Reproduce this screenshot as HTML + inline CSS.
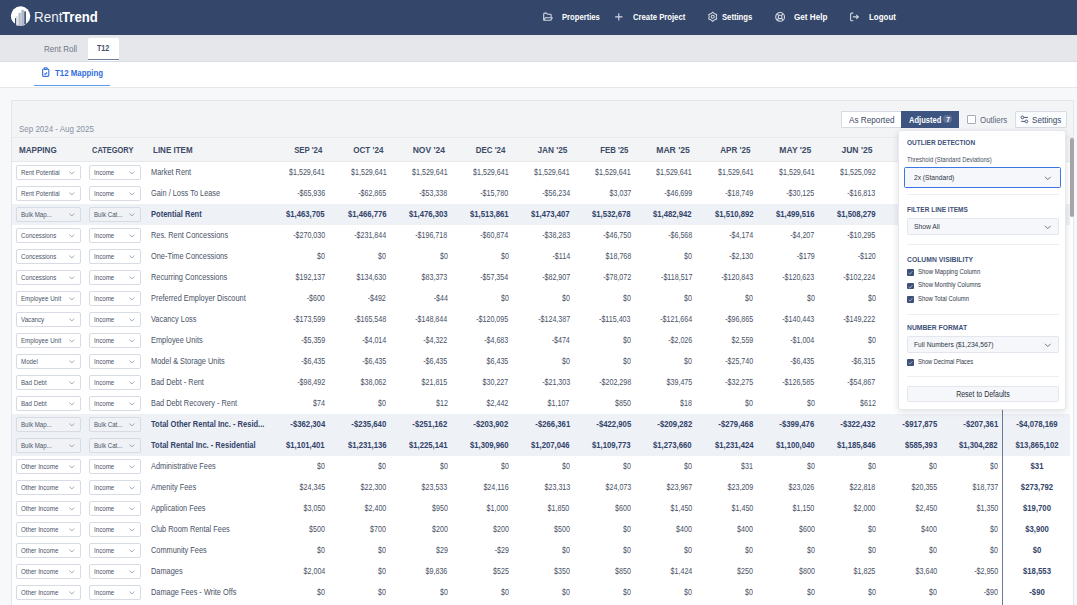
<!DOCTYPE html>
<html><head><meta charset="utf-8"><style>
html,body{margin:0;padding:0;}
body{width:1077px;height:605px;overflow:hidden;position:relative;background:#f7f8fa;font-family:"Liberation Sans", sans-serif;}
.t{position:absolute;white-space:nowrap;line-height:1;}
</style></head><body>
<div style="position:absolute;left:0px;top:0px;width:1077px;height:35px;background:#34476a"></div>
<svg style="position:absolute;left:0;top:0" width="40" height="35" viewBox="0 0 40 35">
<circle cx="20.6" cy="16" r="9.7" fill="#fff"/>
<path d="M10.3 20.3 L12.4 22.3 L13.4 26.2 L10 26.2 Z" fill="#34476a"/>
<rect x="16.2" y="16" width="2.1" height="9.6" fill="#dde1e8"/>
<rect x="18.3" y="12.7" width="2.9" height="12.9" fill="#c9ced9"/>
<rect x="21.2" y="9.8" width="2.9" height="15.8" fill="#bcc3d0"/>
<rect x="19.5" y="13.2" width="0.7" height="12.4" fill="#9ea7b8"/>
<rect x="22.5" y="10.6" width="0.7" height="15" fill="#9ea7b8"/>
<rect x="24.3" y="11.4" width="1.6" height="12.6" fill="#34476a"/>
<rect x="15" y="18" width="1.1" height="8.2" fill="#34476a"/>
<rect x="11" y="16" width="5" height="0.5" fill="#e3e6ec"/>
</svg>
<div class="t" style="left:34.20px;transform-origin:0 50%;top:9.72px;font-size:14.39px;font-weight:400;color:#eef0f4;transform:scaleX(0.936);">Rent</div>
<div class="t" style="left:62.30px;transform-origin:0 50%;top:9.72px;font-size:14.39px;font-weight:700;color:#ffffff;transform:scaleX(0.912);">Trend</div>
<svg style="position:absolute;left:538px;top:8px" width="22" height="18" viewBox="0 0 22 18" fill="none" stroke="#d3d9e3" stroke-width="1.1" stroke-linejoin="round">
<path d="M5.7 12 V6.1 Q5.7 5.1 6.7 5.1 H8.4 L9.5 6.2 H12.2 Q13.1 6.2 13.1 7.1 V9.4"/><path d="M5.8 12.3 L7.3 9.7 H14.3 L12.8 12.3 Z"/></svg>
<div class="t" style="left:562.30px;transform-origin:0 50%;top:12.95px;font-size:8.80px;font-weight:700;color:#ffffff;transform:scaleX(0.870);">Properties</div>
<svg style="position:absolute;left:612px;top:8px" width="14" height="18" viewBox="0 0 14 18" stroke="#d3d9e3" stroke-width="1.1"><path d="M6.8 5.3 V12.5 M3.2 8.9 H10.4"/></svg>
<div class="t" style="left:632.80px;transform-origin:0 50%;top:12.95px;font-size:8.80px;font-weight:700;color:#ffffff;transform:scaleX(0.876);">Create Project</div>
<svg style="position:absolute;left:703px;top:8px" width="22" height="18" viewBox="0 0 22 18" fill="none" stroke="#d3d9e3" stroke-width="1.05" stroke-linejoin="round">
<path d="M9.70 4.20 L11.45 5.77 L13.68 6.50 L13.20 8.80 L13.68 11.10 L11.45 11.83 L9.70 13.40 L7.95 11.83 L5.72 11.10 L6.20 8.80 L5.72 6.50 L7.95 5.77 Z"/><circle cx="9.7" cy="8.8" r="1.5"/></svg>
<div class="t" style="left:722.30px;transform-origin:0 50%;top:12.95px;font-size:8.80px;font-weight:700;color:#ffffff;transform:scaleX(0.872);">Settings</div>
<svg style="position:absolute;left:770px;top:8px" width="22" height="18" viewBox="0 0 22 18" fill="none" stroke="#d3d9e3" stroke-width="1.1">
<circle cx="10.1" cy="8.9" r="4.4"/><rect x="8.4" y="7.2" width="3.4" height="3.4" rx="0.6"/><path d="M7 5.8 L8.4 7.2 M13.2 5.8 L11.8 7.2 M7 12 L8.4 10.6 M13.2 12 L11.8 10.6"/></svg>
<div class="t" style="left:794.20px;transform-origin:0 50%;top:12.95px;font-size:8.80px;font-weight:700;color:#ffffff;transform:scaleX(0.923);">Get Help</div>
<svg style="position:absolute;left:845px;top:8px" width="22" height="18" viewBox="0 0 22 18" fill="none" stroke="#d3d9e3" stroke-width="1.1" stroke-linejoin="round">
<path d="M8.3 5.1 H6.6 Q5.6 5.1 5.6 6.1 V11.7 Q5.6 12.7 6.6 12.7 H8.3"/><path d="M7.9 8.9 H13.3 M11.3 6.9 L13.4 8.9 L11.3 10.9"/></svg>
<div class="t" style="left:868.60px;transform-origin:0 50%;top:12.95px;font-size:8.80px;font-weight:700;color:#ffffff;transform:scaleX(0.902);">Logout</div>
<div style="position:absolute;left:0px;top:35px;width:1077px;height:27px;background:#e6e7eb"></div>
<div style="position:absolute;left:0px;top:61px;width:1077px;height:1px;background:#d9dbe0"></div>
<div class="t" style="left:43.60px;transform-origin:0 50%;top:45.12px;font-size:9.08px;font-weight:400;color:#6f7787;transform:scaleX(0.886);">Rent Roll</div>
<div style="position:absolute;left:88px;top:37.6px;width:31px;height:23px;background:#fff;border-radius:2px 2px 0 0"></div>
<div style="position:absolute;left:88px;top:58.9px;width:31px;height:1.2px;background:#6b7c99"></div>
<div class="t" style="left:97.30px;transform-origin:0 50%;top:44.31px;font-size:8.38px;font-weight:700;color:#45536b;transform:scaleX(0.854);">T12</div>
<div style="position:absolute;left:0px;top:62px;width:1077px;height:25px;background:#fff"></div>
<div style="position:absolute;left:0px;top:87px;width:1077px;height:1px;background:#e5e7eb"></div>
<svg style="position:absolute;left:38px;top:64px" width="16" height="16" viewBox="0 0 16 16" fill="none" stroke="#3a72e0" stroke-width="1.15" stroke-linejoin="round">
<rect x="4.6" y="5" width="6.2" height="7.3" rx="1"/><rect x="6.3" y="3.7" width="2.8" height="1.7" rx="0.5" fill="#fff"/><path d="M6.2 9.6 L7.2 10.4 L9.2 8.5"/></svg>
<div class="t" style="left:55.40px;transform-origin:0 50%;top:68.52px;font-size:9.08px;font-weight:700;color:#2f6ee0;transform:scaleX(0.866);">T12 Mapping</div>
<div style="position:absolute;left:34px;top:84.5px;width:76px;height:1.8px;background:#5b9bf2"></div>
<div style="position:absolute;left:0px;top:88px;width:1077px;height:517px;background:#f7f8fa"></div>
<div style="position:absolute;left:11px;top:100px;width:1063px;height:505px;background:#fff;border:1px solid #e3e6eb;border-bottom:none;box-sizing:border-box"></div>
<div style="position:absolute;left:12px;top:101px;width:1061px;height:36.5px;background:#f3f4f6"></div>
<div style="position:absolute;left:12px;top:137px;width:1061px;height:1px;background:#e6e8ec"></div>
<div style="position:absolute;left:12px;top:138px;width:1061px;height:23.5px;background:#f3f4f6"></div>
<div style="position:absolute;left:12px;top:161px;width:1061px;height:1px;background:#e6e8ec"></div>
<div class="t" style="left:18.80px;transform-origin:0 50%;top:124.85px;font-size:8.80px;font-weight:400;color:#8791a3;transform:scaleX(0.906);">Sep 2024 - Aug 2025</div>
<div class="t" style="left:18.80px;transform-origin:0 50%;top:145.57px;font-size:8.66px;font-weight:700;color:#3c4b66;transform:scaleX(0.933);">MAPPING</div>
<div class="t" style="left:92.00px;transform-origin:0 50%;top:145.57px;font-size:8.66px;font-weight:700;color:#3c4b66;transform:scaleX(0.860);">CATEGORY</div>
<div class="t" style="left:153.20px;transform-origin:0 50%;top:145.57px;font-size:8.66px;font-weight:700;color:#3c4b66;transform:scaleX(0.924);">LINE ITEM</div>
<div class="t" style="right:754.70px;transform-origin:100% 50%;top:145.57px;font-size:8.66px;font-weight:700;color:#3c4b66;transform:scaleX(0.900);">SEP '24</div>
<div class="t" style="right:693.53px;transform-origin:100% 50%;top:145.57px;font-size:8.66px;font-weight:700;color:#3c4b66;transform:scaleX(0.932);">OCT '24</div>
<div class="t" style="right:632.36px;transform-origin:100% 50%;top:145.57px;font-size:8.66px;font-weight:700;color:#3c4b66;transform:scaleX(0.979);">NOV '24</div>
<div class="t" style="right:571.19px;transform-origin:100% 50%;top:145.57px;font-size:8.66px;font-weight:700;color:#3c4b66;transform:scaleX(0.917);">DEC '24</div>
<div class="t" style="right:510.02px;transform-origin:100% 50%;top:145.57px;font-size:8.66px;font-weight:700;color:#3c4b66;transform:scaleX(0.954);">JAN '25</div>
<div class="t" style="right:448.85px;transform-origin:100% 50%;top:145.57px;font-size:8.66px;font-weight:700;color:#3c4b66;transform:scaleX(0.897);">FEB '25</div>
<div class="t" style="right:387.68px;transform-origin:100% 50%;top:145.57px;font-size:8.66px;font-weight:700;color:#3c4b66;transform:scaleX(0.993);">MAR '25</div>
<div class="t" style="right:326.51px;transform-origin:100% 50%;top:145.57px;font-size:8.66px;font-weight:700;color:#3c4b66;transform:scaleX(0.929);">APR '25</div>
<div class="t" style="right:265.34px;transform-origin:100% 50%;top:145.57px;font-size:8.66px;font-weight:700;color:#3c4b66;transform:scaleX(0.989);">MAY '25</div>
<div class="t" style="right:204.17px;transform-origin:100% 50%;top:145.57px;font-size:8.66px;font-weight:700;color:#3c4b66;transform:scaleX(0.986);">JUN '25</div>
<div class="t" style="right:143.00px;transform-origin:100% 50%;top:145.57px;font-size:8.66px;font-weight:700;color:#3c4b66;transform:scaleX(1.014);">JUL '25</div>
<div class="t" style="right:81.83px;transform-origin:100% 50%;top:145.57px;font-size:8.66px;font-weight:700;color:#3c4b66;transform:scaleX(0.926);">AUG '25</div>
<div style="position:absolute;left:16.3px;top:165.3px;width:64.3px;height:14.5px;background:#fff;border:1px solid #d6dbe4;border-radius:2px;box-sizing:border-box"></div>
<div style="position:absolute;left:89.3px;top:165.3px;width:52px;height:14.5px;background:#fff;border:1px solid #d6dbe4;border-radius:2px;box-sizing:border-box"></div>
<div class="t" style="left:20.80px;transform-origin:0 50%;top:169.09px;font-size:6.98px;font-weight:400;color:#4a5467;transform:scaleX(0.885);">Rent Potential</div>
<div class="t" style="left:94.10px;transform-origin:0 50%;top:169.09px;font-size:6.98px;font-weight:400;color:#4a5467;transform:scaleX(0.885);">Income</div>
<svg style="position:absolute;left:68.6px;top:170.90px" width="6" height="4" viewBox="0 0 6 4" fill="none" stroke="#8a93a6" stroke-width="0.8"><path d="M0.4 0.5 L2.8 3 L5.2 0.5"/></svg>
<svg style="position:absolute;left:129.3px;top:170.90px" width="6" height="4" viewBox="0 0 6 4" fill="none" stroke="#8a93a6" stroke-width="0.8"><path d="M0.4 0.5 L2.8 3 L5.2 0.5"/></svg>
<div class="t" style="left:151.10px;transform-origin:0 50%;top:167.77px;font-size:8.66px;font-weight:400;color:#485266;transform:scaleX(0.852);">Market Rent</div>
<div class="t" style="right:751.90px;transform-origin:100% 50%;top:168.43px;font-size:8.94px;font-weight:400;color:#485266;transform:scaleX(0.797);">$1,529,641</div>
<div class="t" style="right:690.73px;transform-origin:100% 50%;top:168.43px;font-size:8.94px;font-weight:400;color:#485266;transform:scaleX(0.797);">$1,529,641</div>
<div class="t" style="right:629.56px;transform-origin:100% 50%;top:168.43px;font-size:8.94px;font-weight:400;color:#485266;transform:scaleX(0.797);">$1,529,641</div>
<div class="t" style="right:568.39px;transform-origin:100% 50%;top:168.43px;font-size:8.94px;font-weight:400;color:#485266;transform:scaleX(0.797);">$1,529,641</div>
<div class="t" style="right:507.22px;transform-origin:100% 50%;top:168.43px;font-size:8.94px;font-weight:400;color:#485266;transform:scaleX(0.797);">$1,529,641</div>
<div class="t" style="right:446.05px;transform-origin:100% 50%;top:168.43px;font-size:8.94px;font-weight:400;color:#485266;transform:scaleX(0.797);">$1,529,641</div>
<div class="t" style="right:384.88px;transform-origin:100% 50%;top:168.43px;font-size:8.94px;font-weight:400;color:#485266;transform:scaleX(0.797);">$1,529,641</div>
<div class="t" style="right:323.71px;transform-origin:100% 50%;top:168.43px;font-size:8.94px;font-weight:400;color:#485266;transform:scaleX(0.797);">$1,529,641</div>
<div class="t" style="right:262.54px;transform-origin:100% 50%;top:168.43px;font-size:8.94px;font-weight:400;color:#485266;transform:scaleX(0.797);">$1,529,641</div>
<div class="t" style="right:201.37px;transform-origin:100% 50%;top:168.43px;font-size:8.94px;font-weight:400;color:#485266;transform:scaleX(0.797);">$1,525,092</div>
<div class="t" style="right:140.20px;transform-origin:100% 50%;top:168.43px;font-size:8.94px;font-weight:400;color:#485266;transform:scaleX(0.797);">$1,529,641</div>
<div class="t" style="right:79.03px;transform-origin:100% 50%;top:168.43px;font-size:8.94px;font-weight:400;color:#485266;transform:scaleX(0.797);">$1,529,641</div>
<div style="position:absolute;left:16.3px;top:186.3px;width:64.3px;height:14.5px;background:#fff;border:1px solid #d6dbe4;border-radius:2px;box-sizing:border-box"></div>
<div style="position:absolute;left:89.3px;top:186.3px;width:52px;height:14.5px;background:#fff;border:1px solid #d6dbe4;border-radius:2px;box-sizing:border-box"></div>
<div class="t" style="left:20.80px;transform-origin:0 50%;top:190.09px;font-size:6.98px;font-weight:400;color:#4a5467;transform:scaleX(0.885);">Rent Potential</div>
<div class="t" style="left:94.10px;transform-origin:0 50%;top:190.09px;font-size:6.98px;font-weight:400;color:#4a5467;transform:scaleX(0.885);">Income</div>
<svg style="position:absolute;left:68.6px;top:191.90px" width="6" height="4" viewBox="0 0 6 4" fill="none" stroke="#8a93a6" stroke-width="0.8"><path d="M0.4 0.5 L2.8 3 L5.2 0.5"/></svg>
<svg style="position:absolute;left:129.3px;top:191.90px" width="6" height="4" viewBox="0 0 6 4" fill="none" stroke="#8a93a6" stroke-width="0.8"><path d="M0.4 0.5 L2.8 3 L5.2 0.5"/></svg>
<div class="t" style="left:151.10px;transform-origin:0 50%;top:188.77px;font-size:8.66px;font-weight:400;color:#485266;transform:scaleX(0.852);">Gain / Loss To Lease</div>
<div class="t" style="right:751.90px;transform-origin:100% 50%;top:189.43px;font-size:8.94px;font-weight:400;color:#485266;transform:scaleX(0.797);">-$65,936</div>
<div class="t" style="right:690.73px;transform-origin:100% 50%;top:189.43px;font-size:8.94px;font-weight:400;color:#485266;transform:scaleX(0.797);">-$62,865</div>
<div class="t" style="right:629.56px;transform-origin:100% 50%;top:189.43px;font-size:8.94px;font-weight:400;color:#485266;transform:scaleX(0.797);">-$53,338</div>
<div class="t" style="right:568.39px;transform-origin:100% 50%;top:189.43px;font-size:8.94px;font-weight:400;color:#485266;transform:scaleX(0.797);">-$15,780</div>
<div class="t" style="right:507.22px;transform-origin:100% 50%;top:189.43px;font-size:8.94px;font-weight:400;color:#485266;transform:scaleX(0.797);">-$56,234</div>
<div class="t" style="right:446.05px;transform-origin:100% 50%;top:189.43px;font-size:8.94px;font-weight:400;color:#485266;transform:scaleX(0.797);">$3,037</div>
<div class="t" style="right:384.88px;transform-origin:100% 50%;top:189.43px;font-size:8.94px;font-weight:400;color:#485266;transform:scaleX(0.797);">-$46,699</div>
<div class="t" style="right:323.71px;transform-origin:100% 50%;top:189.43px;font-size:8.94px;font-weight:400;color:#485266;transform:scaleX(0.797);">-$18,749</div>
<div class="t" style="right:262.54px;transform-origin:100% 50%;top:189.43px;font-size:8.94px;font-weight:400;color:#485266;transform:scaleX(0.797);">-$30,125</div>
<div class="t" style="right:201.37px;transform-origin:100% 50%;top:189.43px;font-size:8.94px;font-weight:400;color:#485266;transform:scaleX(0.797);">-$16,813</div>
<div class="t" style="right:140.20px;transform-origin:100% 50%;top:189.43px;font-size:8.94px;font-weight:400;color:#485266;transform:scaleX(0.797);">-$20,000</div>
<div class="t" style="right:79.03px;transform-origin:100% 50%;top:189.43px;font-size:8.94px;font-weight:400;color:#485266;transform:scaleX(0.797);">-$25,000</div>
<div style="position:absolute;left:12px;top:204px;width:1058px;height:21px;background:#eef1f6"></div>
<div style="position:absolute;left:16.3px;top:207.3px;width:64.3px;height:14.5px;background:#f0f2f6;border:1px solid #d6dbe4;border-radius:2px;box-sizing:border-box"></div>
<div style="position:absolute;left:89.3px;top:207.3px;width:52px;height:14.5px;background:#f0f2f6;border:1px solid #d6dbe4;border-radius:2px;box-sizing:border-box"></div>
<div class="t" style="left:20.80px;transform-origin:0 50%;top:211.09px;font-size:6.98px;font-weight:400;color:#4a5467;transform:scaleX(0.885);">Bulk Map...</div>
<div class="t" style="left:94.10px;transform-origin:0 50%;top:211.09px;font-size:6.98px;font-weight:400;color:#4a5467;transform:scaleX(0.885);">Bulk Cat...</div>
<svg style="position:absolute;left:68.6px;top:212.90px" width="6" height="4" viewBox="0 0 6 4" fill="none" stroke="#8a93a6" stroke-width="0.8"><path d="M0.4 0.5 L2.8 3 L5.2 0.5"/></svg>
<svg style="position:absolute;left:129.3px;top:212.90px" width="6" height="4" viewBox="0 0 6 4" fill="none" stroke="#8a93a6" stroke-width="0.8"><path d="M0.4 0.5 L2.8 3 L5.2 0.5"/></svg>
<div class="t" style="left:151.10px;transform-origin:0 50%;top:209.77px;font-size:8.66px;font-weight:700;color:#32436a;transform:scaleX(0.871);">Potential Rent</div>
<div class="t" style="right:751.90px;transform-origin:100% 50%;top:210.43px;font-size:8.94px;font-weight:700;color:#32436a;transform:scaleX(0.867);">$1,463,705</div>
<div class="t" style="right:690.73px;transform-origin:100% 50%;top:210.43px;font-size:8.94px;font-weight:700;color:#32436a;transform:scaleX(0.867);">$1,466,776</div>
<div class="t" style="right:629.56px;transform-origin:100% 50%;top:210.43px;font-size:8.94px;font-weight:700;color:#32436a;transform:scaleX(0.867);">$1,476,303</div>
<div class="t" style="right:568.39px;transform-origin:100% 50%;top:210.43px;font-size:8.94px;font-weight:700;color:#32436a;transform:scaleX(0.867);">$1,513,861</div>
<div class="t" style="right:507.22px;transform-origin:100% 50%;top:210.43px;font-size:8.94px;font-weight:700;color:#32436a;transform:scaleX(0.867);">$1,473,407</div>
<div class="t" style="right:446.05px;transform-origin:100% 50%;top:210.43px;font-size:8.94px;font-weight:700;color:#32436a;transform:scaleX(0.867);">$1,532,678</div>
<div class="t" style="right:384.88px;transform-origin:100% 50%;top:210.43px;font-size:8.94px;font-weight:700;color:#32436a;transform:scaleX(0.867);">$1,482,942</div>
<div class="t" style="right:323.71px;transform-origin:100% 50%;top:210.43px;font-size:8.94px;font-weight:700;color:#32436a;transform:scaleX(0.867);">$1,510,892</div>
<div class="t" style="right:262.54px;transform-origin:100% 50%;top:210.43px;font-size:8.94px;font-weight:700;color:#32436a;transform:scaleX(0.867);">$1,499,516</div>
<div class="t" style="right:201.37px;transform-origin:100% 50%;top:210.43px;font-size:8.94px;font-weight:700;color:#32436a;transform:scaleX(0.867);">$1,508,279</div>
<div class="t" style="right:140.20px;transform-origin:100% 50%;top:210.43px;font-size:8.94px;font-weight:700;color:#32436a;transform:scaleX(0.867);">$1,509,641</div>
<div class="t" style="right:79.03px;transform-origin:100% 50%;top:210.43px;font-size:8.94px;font-weight:700;color:#32436a;transform:scaleX(0.867);">$1,504,641</div>
<div style="position:absolute;left:16.3px;top:228.3px;width:64.3px;height:14.5px;background:#fff;border:1px solid #d6dbe4;border-radius:2px;box-sizing:border-box"></div>
<div style="position:absolute;left:89.3px;top:228.3px;width:52px;height:14.5px;background:#fff;border:1px solid #d6dbe4;border-radius:2px;box-sizing:border-box"></div>
<div class="t" style="left:20.80px;transform-origin:0 50%;top:232.09px;font-size:6.98px;font-weight:400;color:#4a5467;transform:scaleX(0.885);">Concessions</div>
<div class="t" style="left:94.10px;transform-origin:0 50%;top:232.09px;font-size:6.98px;font-weight:400;color:#4a5467;transform:scaleX(0.885);">Income</div>
<svg style="position:absolute;left:68.6px;top:233.90px" width="6" height="4" viewBox="0 0 6 4" fill="none" stroke="#8a93a6" stroke-width="0.8"><path d="M0.4 0.5 L2.8 3 L5.2 0.5"/></svg>
<svg style="position:absolute;left:129.3px;top:233.90px" width="6" height="4" viewBox="0 0 6 4" fill="none" stroke="#8a93a6" stroke-width="0.8"><path d="M0.4 0.5 L2.8 3 L5.2 0.5"/></svg>
<div class="t" style="left:151.10px;transform-origin:0 50%;top:230.77px;font-size:8.66px;font-weight:400;color:#485266;transform:scaleX(0.852);">Res. Rent Concessions</div>
<div class="t" style="right:751.90px;transform-origin:100% 50%;top:231.43px;font-size:8.94px;font-weight:400;color:#485266;transform:scaleX(0.797);">-$270,030</div>
<div class="t" style="right:690.73px;transform-origin:100% 50%;top:231.43px;font-size:8.94px;font-weight:400;color:#485266;transform:scaleX(0.797);">-$231,844</div>
<div class="t" style="right:629.56px;transform-origin:100% 50%;top:231.43px;font-size:8.94px;font-weight:400;color:#485266;transform:scaleX(0.797);">-$196,718</div>
<div class="t" style="right:568.39px;transform-origin:100% 50%;top:231.43px;font-size:8.94px;font-weight:400;color:#485266;transform:scaleX(0.797);">-$60,874</div>
<div class="t" style="right:507.22px;transform-origin:100% 50%;top:231.43px;font-size:8.94px;font-weight:400;color:#485266;transform:scaleX(0.797);">-$38,283</div>
<div class="t" style="right:446.05px;transform-origin:100% 50%;top:231.43px;font-size:8.94px;font-weight:400;color:#485266;transform:scaleX(0.797);">-$46,750</div>
<div class="t" style="right:384.88px;transform-origin:100% 50%;top:231.43px;font-size:8.94px;font-weight:400;color:#485266;transform:scaleX(0.797);">-$6,568</div>
<div class="t" style="right:323.71px;transform-origin:100% 50%;top:231.43px;font-size:8.94px;font-weight:400;color:#485266;transform:scaleX(0.797);">-$4,174</div>
<div class="t" style="right:262.54px;transform-origin:100% 50%;top:231.43px;font-size:8.94px;font-weight:400;color:#485266;transform:scaleX(0.797);">-$4,207</div>
<div class="t" style="right:201.37px;transform-origin:100% 50%;top:231.43px;font-size:8.94px;font-weight:400;color:#485266;transform:scaleX(0.797);">-$10,295</div>
<div class="t" style="right:140.20px;transform-origin:100% 50%;top:231.43px;font-size:8.94px;font-weight:400;color:#485266;transform:scaleX(0.797);">-$9,000</div>
<div class="t" style="right:79.03px;transform-origin:100% 50%;top:231.43px;font-size:8.94px;font-weight:400;color:#485266;transform:scaleX(0.797);">-$8,000</div>
<div style="position:absolute;left:16.3px;top:249.3px;width:64.3px;height:14.5px;background:#fff;border:1px solid #d6dbe4;border-radius:2px;box-sizing:border-box"></div>
<div style="position:absolute;left:89.3px;top:249.3px;width:52px;height:14.5px;background:#fff;border:1px solid #d6dbe4;border-radius:2px;box-sizing:border-box"></div>
<div class="t" style="left:20.80px;transform-origin:0 50%;top:253.09px;font-size:6.98px;font-weight:400;color:#4a5467;transform:scaleX(0.885);">Concessions</div>
<div class="t" style="left:94.10px;transform-origin:0 50%;top:253.09px;font-size:6.98px;font-weight:400;color:#4a5467;transform:scaleX(0.885);">Income</div>
<svg style="position:absolute;left:68.6px;top:254.90px" width="6" height="4" viewBox="0 0 6 4" fill="none" stroke="#8a93a6" stroke-width="0.8"><path d="M0.4 0.5 L2.8 3 L5.2 0.5"/></svg>
<svg style="position:absolute;left:129.3px;top:254.90px" width="6" height="4" viewBox="0 0 6 4" fill="none" stroke="#8a93a6" stroke-width="0.8"><path d="M0.4 0.5 L2.8 3 L5.2 0.5"/></svg>
<div class="t" style="left:151.10px;transform-origin:0 50%;top:251.77px;font-size:8.66px;font-weight:400;color:#485266;transform:scaleX(0.852);">One-Time Concessions</div>
<div class="t" style="right:751.90px;transform-origin:100% 50%;top:252.43px;font-size:8.94px;font-weight:400;color:#485266;transform:scaleX(0.797);">$0</div>
<div class="t" style="right:690.73px;transform-origin:100% 50%;top:252.43px;font-size:8.94px;font-weight:400;color:#485266;transform:scaleX(0.797);">$0</div>
<div class="t" style="right:629.56px;transform-origin:100% 50%;top:252.43px;font-size:8.94px;font-weight:400;color:#485266;transform:scaleX(0.797);">$0</div>
<div class="t" style="right:568.39px;transform-origin:100% 50%;top:252.43px;font-size:8.94px;font-weight:400;color:#485266;transform:scaleX(0.797);">$0</div>
<div class="t" style="right:507.22px;transform-origin:100% 50%;top:252.43px;font-size:8.94px;font-weight:400;color:#485266;transform:scaleX(0.797);">-$114</div>
<div class="t" style="right:446.05px;transform-origin:100% 50%;top:252.43px;font-size:8.94px;font-weight:400;color:#485266;transform:scaleX(0.797);">$18,768</div>
<div class="t" style="right:384.88px;transform-origin:100% 50%;top:252.43px;font-size:8.94px;font-weight:400;color:#485266;transform:scaleX(0.797);">$0</div>
<div class="t" style="right:323.71px;transform-origin:100% 50%;top:252.43px;font-size:8.94px;font-weight:400;color:#485266;transform:scaleX(0.797);">-$2,130</div>
<div class="t" style="right:262.54px;transform-origin:100% 50%;top:252.43px;font-size:8.94px;font-weight:400;color:#485266;transform:scaleX(0.797);">-$179</div>
<div class="t" style="right:201.37px;transform-origin:100% 50%;top:252.43px;font-size:8.94px;font-weight:400;color:#485266;transform:scaleX(0.797);">-$120</div>
<div class="t" style="right:140.20px;transform-origin:100% 50%;top:252.43px;font-size:8.94px;font-weight:400;color:#485266;transform:scaleX(0.797);">$0</div>
<div class="t" style="right:79.03px;transform-origin:100% 50%;top:252.43px;font-size:8.94px;font-weight:400;color:#485266;transform:scaleX(0.797);">$0</div>
<div style="position:absolute;left:16.3px;top:270.3px;width:64.3px;height:14.5px;background:#fff;border:1px solid #d6dbe4;border-radius:2px;box-sizing:border-box"></div>
<div style="position:absolute;left:89.3px;top:270.3px;width:52px;height:14.5px;background:#fff;border:1px solid #d6dbe4;border-radius:2px;box-sizing:border-box"></div>
<div class="t" style="left:20.80px;transform-origin:0 50%;top:274.09px;font-size:6.98px;font-weight:400;color:#4a5467;transform:scaleX(0.885);">Concessions</div>
<div class="t" style="left:94.10px;transform-origin:0 50%;top:274.09px;font-size:6.98px;font-weight:400;color:#4a5467;transform:scaleX(0.885);">Income</div>
<svg style="position:absolute;left:68.6px;top:275.90px" width="6" height="4" viewBox="0 0 6 4" fill="none" stroke="#8a93a6" stroke-width="0.8"><path d="M0.4 0.5 L2.8 3 L5.2 0.5"/></svg>
<svg style="position:absolute;left:129.3px;top:275.90px" width="6" height="4" viewBox="0 0 6 4" fill="none" stroke="#8a93a6" stroke-width="0.8"><path d="M0.4 0.5 L2.8 3 L5.2 0.5"/></svg>
<div class="t" style="left:151.10px;transform-origin:0 50%;top:272.77px;font-size:8.66px;font-weight:400;color:#485266;transform:scaleX(0.852);">Recurring Concessions</div>
<div class="t" style="right:751.90px;transform-origin:100% 50%;top:273.43px;font-size:8.94px;font-weight:400;color:#485266;transform:scaleX(0.797);">$192,137</div>
<div class="t" style="right:690.73px;transform-origin:100% 50%;top:273.43px;font-size:8.94px;font-weight:400;color:#485266;transform:scaleX(0.797);">$134,630</div>
<div class="t" style="right:629.56px;transform-origin:100% 50%;top:273.43px;font-size:8.94px;font-weight:400;color:#485266;transform:scaleX(0.797);">$83,373</div>
<div class="t" style="right:568.39px;transform-origin:100% 50%;top:273.43px;font-size:8.94px;font-weight:400;color:#485266;transform:scaleX(0.797);">-$57,354</div>
<div class="t" style="right:507.22px;transform-origin:100% 50%;top:273.43px;font-size:8.94px;font-weight:400;color:#485266;transform:scaleX(0.797);">-$82,907</div>
<div class="t" style="right:446.05px;transform-origin:100% 50%;top:273.43px;font-size:8.94px;font-weight:400;color:#485266;transform:scaleX(0.797);">-$78,072</div>
<div class="t" style="right:384.88px;transform-origin:100% 50%;top:273.43px;font-size:8.94px;font-weight:400;color:#485266;transform:scaleX(0.797);">-$118,517</div>
<div class="t" style="right:323.71px;transform-origin:100% 50%;top:273.43px;font-size:8.94px;font-weight:400;color:#485266;transform:scaleX(0.797);">-$120,843</div>
<div class="t" style="right:262.54px;transform-origin:100% 50%;top:273.43px;font-size:8.94px;font-weight:400;color:#485266;transform:scaleX(0.797);">-$120,623</div>
<div class="t" style="right:201.37px;transform-origin:100% 50%;top:273.43px;font-size:8.94px;font-weight:400;color:#485266;transform:scaleX(0.797);">-$102,224</div>
<div class="t" style="right:140.20px;transform-origin:100% 50%;top:273.43px;font-size:8.94px;font-weight:400;color:#485266;transform:scaleX(0.797);">$0</div>
<div class="t" style="right:79.03px;transform-origin:100% 50%;top:273.43px;font-size:8.94px;font-weight:400;color:#485266;transform:scaleX(0.797);">$0</div>
<div style="position:absolute;left:16.3px;top:291.3px;width:64.3px;height:14.5px;background:#fff;border:1px solid #d6dbe4;border-radius:2px;box-sizing:border-box"></div>
<div style="position:absolute;left:89.3px;top:291.3px;width:52px;height:14.5px;background:#fff;border:1px solid #d6dbe4;border-radius:2px;box-sizing:border-box"></div>
<div class="t" style="left:20.80px;transform-origin:0 50%;top:295.09px;font-size:6.98px;font-weight:400;color:#4a5467;transform:scaleX(0.885);">Employee Unit</div>
<div class="t" style="left:94.10px;transform-origin:0 50%;top:295.09px;font-size:6.98px;font-weight:400;color:#4a5467;transform:scaleX(0.885);">Income</div>
<svg style="position:absolute;left:68.6px;top:296.90px" width="6" height="4" viewBox="0 0 6 4" fill="none" stroke="#8a93a6" stroke-width="0.8"><path d="M0.4 0.5 L2.8 3 L5.2 0.5"/></svg>
<svg style="position:absolute;left:129.3px;top:296.90px" width="6" height="4" viewBox="0 0 6 4" fill="none" stroke="#8a93a6" stroke-width="0.8"><path d="M0.4 0.5 L2.8 3 L5.2 0.5"/></svg>
<div class="t" style="left:151.10px;transform-origin:0 50%;top:293.77px;font-size:8.66px;font-weight:400;color:#485266;transform:scaleX(0.852);">Preferred Employer Discount</div>
<div class="t" style="right:751.90px;transform-origin:100% 50%;top:294.43px;font-size:8.94px;font-weight:400;color:#485266;transform:scaleX(0.797);">-$600</div>
<div class="t" style="right:690.73px;transform-origin:100% 50%;top:294.43px;font-size:8.94px;font-weight:400;color:#485266;transform:scaleX(0.797);">-$492</div>
<div class="t" style="right:629.56px;transform-origin:100% 50%;top:294.43px;font-size:8.94px;font-weight:400;color:#485266;transform:scaleX(0.797);">-$44</div>
<div class="t" style="right:568.39px;transform-origin:100% 50%;top:294.43px;font-size:8.94px;font-weight:400;color:#485266;transform:scaleX(0.797);">$0</div>
<div class="t" style="right:507.22px;transform-origin:100% 50%;top:294.43px;font-size:8.94px;font-weight:400;color:#485266;transform:scaleX(0.797);">$0</div>
<div class="t" style="right:446.05px;transform-origin:100% 50%;top:294.43px;font-size:8.94px;font-weight:400;color:#485266;transform:scaleX(0.797);">$0</div>
<div class="t" style="right:384.88px;transform-origin:100% 50%;top:294.43px;font-size:8.94px;font-weight:400;color:#485266;transform:scaleX(0.797);">$0</div>
<div class="t" style="right:323.71px;transform-origin:100% 50%;top:294.43px;font-size:8.94px;font-weight:400;color:#485266;transform:scaleX(0.797);">$0</div>
<div class="t" style="right:262.54px;transform-origin:100% 50%;top:294.43px;font-size:8.94px;font-weight:400;color:#485266;transform:scaleX(0.797);">$0</div>
<div class="t" style="right:201.37px;transform-origin:100% 50%;top:294.43px;font-size:8.94px;font-weight:400;color:#485266;transform:scaleX(0.797);">$0</div>
<div class="t" style="right:140.20px;transform-origin:100% 50%;top:294.43px;font-size:8.94px;font-weight:400;color:#485266;transform:scaleX(0.797);">$0</div>
<div class="t" style="right:79.03px;transform-origin:100% 50%;top:294.43px;font-size:8.94px;font-weight:400;color:#485266;transform:scaleX(0.797);">$0</div>
<div style="position:absolute;left:16.3px;top:312.3px;width:64.3px;height:14.5px;background:#fff;border:1px solid #d6dbe4;border-radius:2px;box-sizing:border-box"></div>
<div style="position:absolute;left:89.3px;top:312.3px;width:52px;height:14.5px;background:#fff;border:1px solid #d6dbe4;border-radius:2px;box-sizing:border-box"></div>
<div class="t" style="left:20.80px;transform-origin:0 50%;top:316.09px;font-size:6.98px;font-weight:400;color:#4a5467;transform:scaleX(0.885);">Vacancy</div>
<div class="t" style="left:94.10px;transform-origin:0 50%;top:316.09px;font-size:6.98px;font-weight:400;color:#4a5467;transform:scaleX(0.885);">Income</div>
<svg style="position:absolute;left:68.6px;top:317.90px" width="6" height="4" viewBox="0 0 6 4" fill="none" stroke="#8a93a6" stroke-width="0.8"><path d="M0.4 0.5 L2.8 3 L5.2 0.5"/></svg>
<svg style="position:absolute;left:129.3px;top:317.90px" width="6" height="4" viewBox="0 0 6 4" fill="none" stroke="#8a93a6" stroke-width="0.8"><path d="M0.4 0.5 L2.8 3 L5.2 0.5"/></svg>
<div class="t" style="left:151.10px;transform-origin:0 50%;top:314.77px;font-size:8.66px;font-weight:400;color:#485266;transform:scaleX(0.852);">Vacancy Loss</div>
<div class="t" style="right:751.90px;transform-origin:100% 50%;top:315.43px;font-size:8.94px;font-weight:400;color:#485266;transform:scaleX(0.797);">-$173,599</div>
<div class="t" style="right:690.73px;transform-origin:100% 50%;top:315.43px;font-size:8.94px;font-weight:400;color:#485266;transform:scaleX(0.797);">-$165,548</div>
<div class="t" style="right:629.56px;transform-origin:100% 50%;top:315.43px;font-size:8.94px;font-weight:400;color:#485266;transform:scaleX(0.797);">-$148,844</div>
<div class="t" style="right:568.39px;transform-origin:100% 50%;top:315.43px;font-size:8.94px;font-weight:400;color:#485266;transform:scaleX(0.797);">-$120,095</div>
<div class="t" style="right:507.22px;transform-origin:100% 50%;top:315.43px;font-size:8.94px;font-weight:400;color:#485266;transform:scaleX(0.797);">-$124,387</div>
<div class="t" style="right:446.05px;transform-origin:100% 50%;top:315.43px;font-size:8.94px;font-weight:400;color:#485266;transform:scaleX(0.797);">-$115,403</div>
<div class="t" style="right:384.88px;transform-origin:100% 50%;top:315.43px;font-size:8.94px;font-weight:400;color:#485266;transform:scaleX(0.797);">-$121,664</div>
<div class="t" style="right:323.71px;transform-origin:100% 50%;top:315.43px;font-size:8.94px;font-weight:400;color:#485266;transform:scaleX(0.797);">-$96,865</div>
<div class="t" style="right:262.54px;transform-origin:100% 50%;top:315.43px;font-size:8.94px;font-weight:400;color:#485266;transform:scaleX(0.797);">-$140,443</div>
<div class="t" style="right:201.37px;transform-origin:100% 50%;top:315.43px;font-size:8.94px;font-weight:400;color:#485266;transform:scaleX(0.797);">-$149,222</div>
<div class="t" style="right:140.20px;transform-origin:100% 50%;top:315.43px;font-size:8.94px;font-weight:400;color:#485266;transform:scaleX(0.797);">$0</div>
<div class="t" style="right:79.03px;transform-origin:100% 50%;top:315.43px;font-size:8.94px;font-weight:400;color:#485266;transform:scaleX(0.797);">$0</div>
<div style="position:absolute;left:16.3px;top:333.3px;width:64.3px;height:14.5px;background:#fff;border:1px solid #d6dbe4;border-radius:2px;box-sizing:border-box"></div>
<div style="position:absolute;left:89.3px;top:333.3px;width:52px;height:14.5px;background:#fff;border:1px solid #d6dbe4;border-radius:2px;box-sizing:border-box"></div>
<div class="t" style="left:20.80px;transform-origin:0 50%;top:337.09px;font-size:6.98px;font-weight:400;color:#4a5467;transform:scaleX(0.885);">Employee Unit</div>
<div class="t" style="left:94.10px;transform-origin:0 50%;top:337.09px;font-size:6.98px;font-weight:400;color:#4a5467;transform:scaleX(0.885);">Income</div>
<svg style="position:absolute;left:68.6px;top:338.90px" width="6" height="4" viewBox="0 0 6 4" fill="none" stroke="#8a93a6" stroke-width="0.8"><path d="M0.4 0.5 L2.8 3 L5.2 0.5"/></svg>
<svg style="position:absolute;left:129.3px;top:338.90px" width="6" height="4" viewBox="0 0 6 4" fill="none" stroke="#8a93a6" stroke-width="0.8"><path d="M0.4 0.5 L2.8 3 L5.2 0.5"/></svg>
<div class="t" style="left:151.10px;transform-origin:0 50%;top:335.77px;font-size:8.66px;font-weight:400;color:#485266;transform:scaleX(0.852);">Employee Units</div>
<div class="t" style="right:751.90px;transform-origin:100% 50%;top:336.43px;font-size:8.94px;font-weight:400;color:#485266;transform:scaleX(0.797);">-$5,359</div>
<div class="t" style="right:690.73px;transform-origin:100% 50%;top:336.43px;font-size:8.94px;font-weight:400;color:#485266;transform:scaleX(0.797);">-$4,014</div>
<div class="t" style="right:629.56px;transform-origin:100% 50%;top:336.43px;font-size:8.94px;font-weight:400;color:#485266;transform:scaleX(0.797);">-$4,322</div>
<div class="t" style="right:568.39px;transform-origin:100% 50%;top:336.43px;font-size:8.94px;font-weight:400;color:#485266;transform:scaleX(0.797);">-$4,683</div>
<div class="t" style="right:507.22px;transform-origin:100% 50%;top:336.43px;font-size:8.94px;font-weight:400;color:#485266;transform:scaleX(0.797);">-$474</div>
<div class="t" style="right:446.05px;transform-origin:100% 50%;top:336.43px;font-size:8.94px;font-weight:400;color:#485266;transform:scaleX(0.797);">$0</div>
<div class="t" style="right:384.88px;transform-origin:100% 50%;top:336.43px;font-size:8.94px;font-weight:400;color:#485266;transform:scaleX(0.797);">-$2,026</div>
<div class="t" style="right:323.71px;transform-origin:100% 50%;top:336.43px;font-size:8.94px;font-weight:400;color:#485266;transform:scaleX(0.797);">$2,559</div>
<div class="t" style="right:262.54px;transform-origin:100% 50%;top:336.43px;font-size:8.94px;font-weight:400;color:#485266;transform:scaleX(0.797);">-$1,004</div>
<div class="t" style="right:201.37px;transform-origin:100% 50%;top:336.43px;font-size:8.94px;font-weight:400;color:#485266;transform:scaleX(0.797);">$0</div>
<div class="t" style="right:140.20px;transform-origin:100% 50%;top:336.43px;font-size:8.94px;font-weight:400;color:#485266;transform:scaleX(0.797);">$0</div>
<div class="t" style="right:79.03px;transform-origin:100% 50%;top:336.43px;font-size:8.94px;font-weight:400;color:#485266;transform:scaleX(0.797);">$0</div>
<div style="position:absolute;left:16.3px;top:354.3px;width:64.3px;height:14.5px;background:#fff;border:1px solid #d6dbe4;border-radius:2px;box-sizing:border-box"></div>
<div style="position:absolute;left:89.3px;top:354.3px;width:52px;height:14.5px;background:#fff;border:1px solid #d6dbe4;border-radius:2px;box-sizing:border-box"></div>
<div class="t" style="left:20.80px;transform-origin:0 50%;top:358.09px;font-size:6.98px;font-weight:400;color:#4a5467;transform:scaleX(0.885);">Model</div>
<div class="t" style="left:94.10px;transform-origin:0 50%;top:358.09px;font-size:6.98px;font-weight:400;color:#4a5467;transform:scaleX(0.885);">Income</div>
<svg style="position:absolute;left:68.6px;top:359.90px" width="6" height="4" viewBox="0 0 6 4" fill="none" stroke="#8a93a6" stroke-width="0.8"><path d="M0.4 0.5 L2.8 3 L5.2 0.5"/></svg>
<svg style="position:absolute;left:129.3px;top:359.90px" width="6" height="4" viewBox="0 0 6 4" fill="none" stroke="#8a93a6" stroke-width="0.8"><path d="M0.4 0.5 L2.8 3 L5.2 0.5"/></svg>
<div class="t" style="left:151.10px;transform-origin:0 50%;top:356.77px;font-size:8.66px;font-weight:400;color:#485266;transform:scaleX(0.852);">Model & Storage Units</div>
<div class="t" style="right:751.90px;transform-origin:100% 50%;top:357.43px;font-size:8.94px;font-weight:400;color:#485266;transform:scaleX(0.797);">-$6,435</div>
<div class="t" style="right:690.73px;transform-origin:100% 50%;top:357.43px;font-size:8.94px;font-weight:400;color:#485266;transform:scaleX(0.797);">-$6,435</div>
<div class="t" style="right:629.56px;transform-origin:100% 50%;top:357.43px;font-size:8.94px;font-weight:400;color:#485266;transform:scaleX(0.797);">-$6,435</div>
<div class="t" style="right:568.39px;transform-origin:100% 50%;top:357.43px;font-size:8.94px;font-weight:400;color:#485266;transform:scaleX(0.797);">$6,435</div>
<div class="t" style="right:507.22px;transform-origin:100% 50%;top:357.43px;font-size:8.94px;font-weight:400;color:#485266;transform:scaleX(0.797);">$0</div>
<div class="t" style="right:446.05px;transform-origin:100% 50%;top:357.43px;font-size:8.94px;font-weight:400;color:#485266;transform:scaleX(0.797);">$0</div>
<div class="t" style="right:384.88px;transform-origin:100% 50%;top:357.43px;font-size:8.94px;font-weight:400;color:#485266;transform:scaleX(0.797);">$0</div>
<div class="t" style="right:323.71px;transform-origin:100% 50%;top:357.43px;font-size:8.94px;font-weight:400;color:#485266;transform:scaleX(0.797);">-$25,740</div>
<div class="t" style="right:262.54px;transform-origin:100% 50%;top:357.43px;font-size:8.94px;font-weight:400;color:#485266;transform:scaleX(0.797);">-$6,435</div>
<div class="t" style="right:201.37px;transform-origin:100% 50%;top:357.43px;font-size:8.94px;font-weight:400;color:#485266;transform:scaleX(0.797);">-$6,315</div>
<div class="t" style="right:140.20px;transform-origin:100% 50%;top:357.43px;font-size:8.94px;font-weight:400;color:#485266;transform:scaleX(0.797);">$0</div>
<div class="t" style="right:79.03px;transform-origin:100% 50%;top:357.43px;font-size:8.94px;font-weight:400;color:#485266;transform:scaleX(0.797);">$0</div>
<div style="position:absolute;left:16.3px;top:375.3px;width:64.3px;height:14.5px;background:#fff;border:1px solid #d6dbe4;border-radius:2px;box-sizing:border-box"></div>
<div style="position:absolute;left:89.3px;top:375.3px;width:52px;height:14.5px;background:#fff;border:1px solid #d6dbe4;border-radius:2px;box-sizing:border-box"></div>
<div class="t" style="left:20.80px;transform-origin:0 50%;top:379.09px;font-size:6.98px;font-weight:400;color:#4a5467;transform:scaleX(0.885);">Bad Debt</div>
<div class="t" style="left:94.10px;transform-origin:0 50%;top:379.09px;font-size:6.98px;font-weight:400;color:#4a5467;transform:scaleX(0.885);">Income</div>
<svg style="position:absolute;left:68.6px;top:380.90px" width="6" height="4" viewBox="0 0 6 4" fill="none" stroke="#8a93a6" stroke-width="0.8"><path d="M0.4 0.5 L2.8 3 L5.2 0.5"/></svg>
<svg style="position:absolute;left:129.3px;top:380.90px" width="6" height="4" viewBox="0 0 6 4" fill="none" stroke="#8a93a6" stroke-width="0.8"><path d="M0.4 0.5 L2.8 3 L5.2 0.5"/></svg>
<div class="t" style="left:151.10px;transform-origin:0 50%;top:377.77px;font-size:8.66px;font-weight:400;color:#485266;transform:scaleX(0.852);">Bad Debt - Rent</div>
<div class="t" style="right:751.90px;transform-origin:100% 50%;top:378.43px;font-size:8.94px;font-weight:400;color:#485266;transform:scaleX(0.797);">-$98,492</div>
<div class="t" style="right:690.73px;transform-origin:100% 50%;top:378.43px;font-size:8.94px;font-weight:400;color:#485266;transform:scaleX(0.797);">$38,062</div>
<div class="t" style="right:629.56px;transform-origin:100% 50%;top:378.43px;font-size:8.94px;font-weight:400;color:#485266;transform:scaleX(0.797);">$21,815</div>
<div class="t" style="right:568.39px;transform-origin:100% 50%;top:378.43px;font-size:8.94px;font-weight:400;color:#485266;transform:scaleX(0.797);">$30,227</div>
<div class="t" style="right:507.22px;transform-origin:100% 50%;top:378.43px;font-size:8.94px;font-weight:400;color:#485266;transform:scaleX(0.797);">-$21,303</div>
<div class="t" style="right:446.05px;transform-origin:100% 50%;top:378.43px;font-size:8.94px;font-weight:400;color:#485266;transform:scaleX(0.797);">-$202,298</div>
<div class="t" style="right:384.88px;transform-origin:100% 50%;top:378.43px;font-size:8.94px;font-weight:400;color:#485266;transform:scaleX(0.797);">$39,475</div>
<div class="t" style="right:323.71px;transform-origin:100% 50%;top:378.43px;font-size:8.94px;font-weight:400;color:#485266;transform:scaleX(0.797);">-$32,275</div>
<div class="t" style="right:262.54px;transform-origin:100% 50%;top:378.43px;font-size:8.94px;font-weight:400;color:#485266;transform:scaleX(0.797);">-$126,585</div>
<div class="t" style="right:201.37px;transform-origin:100% 50%;top:378.43px;font-size:8.94px;font-weight:400;color:#485266;transform:scaleX(0.797);">-$54,867</div>
<div class="t" style="right:140.20px;transform-origin:100% 50%;top:378.43px;font-size:8.94px;font-weight:400;color:#485266;transform:scaleX(0.797);">$0</div>
<div class="t" style="right:79.03px;transform-origin:100% 50%;top:378.43px;font-size:8.94px;font-weight:400;color:#485266;transform:scaleX(0.797);">$0</div>
<div style="position:absolute;left:16.3px;top:396.3px;width:64.3px;height:14.5px;background:#fff;border:1px solid #d6dbe4;border-radius:2px;box-sizing:border-box"></div>
<div style="position:absolute;left:89.3px;top:396.3px;width:52px;height:14.5px;background:#fff;border:1px solid #d6dbe4;border-radius:2px;box-sizing:border-box"></div>
<div class="t" style="left:20.80px;transform-origin:0 50%;top:400.09px;font-size:6.98px;font-weight:400;color:#4a5467;transform:scaleX(0.885);">Bad Debt</div>
<div class="t" style="left:94.10px;transform-origin:0 50%;top:400.09px;font-size:6.98px;font-weight:400;color:#4a5467;transform:scaleX(0.885);">Income</div>
<svg style="position:absolute;left:68.6px;top:401.90px" width="6" height="4" viewBox="0 0 6 4" fill="none" stroke="#8a93a6" stroke-width="0.8"><path d="M0.4 0.5 L2.8 3 L5.2 0.5"/></svg>
<svg style="position:absolute;left:129.3px;top:401.90px" width="6" height="4" viewBox="0 0 6 4" fill="none" stroke="#8a93a6" stroke-width="0.8"><path d="M0.4 0.5 L2.8 3 L5.2 0.5"/></svg>
<div class="t" style="left:151.10px;transform-origin:0 50%;top:398.77px;font-size:8.66px;font-weight:400;color:#485266;transform:scaleX(0.852);">Bad Debt Recovery - Rent</div>
<div class="t" style="right:751.90px;transform-origin:100% 50%;top:399.43px;font-size:8.94px;font-weight:400;color:#485266;transform:scaleX(0.797);">$74</div>
<div class="t" style="right:690.73px;transform-origin:100% 50%;top:399.43px;font-size:8.94px;font-weight:400;color:#485266;transform:scaleX(0.797);">$0</div>
<div class="t" style="right:629.56px;transform-origin:100% 50%;top:399.43px;font-size:8.94px;font-weight:400;color:#485266;transform:scaleX(0.797);">$12</div>
<div class="t" style="right:568.39px;transform-origin:100% 50%;top:399.43px;font-size:8.94px;font-weight:400;color:#485266;transform:scaleX(0.797);">$2,442</div>
<div class="t" style="right:507.22px;transform-origin:100% 50%;top:399.43px;font-size:8.94px;font-weight:400;color:#485266;transform:scaleX(0.797);">$1,107</div>
<div class="t" style="right:446.05px;transform-origin:100% 50%;top:399.43px;font-size:8.94px;font-weight:400;color:#485266;transform:scaleX(0.797);">$850</div>
<div class="t" style="right:384.88px;transform-origin:100% 50%;top:399.43px;font-size:8.94px;font-weight:400;color:#485266;transform:scaleX(0.797);">$18</div>
<div class="t" style="right:323.71px;transform-origin:100% 50%;top:399.43px;font-size:8.94px;font-weight:400;color:#485266;transform:scaleX(0.797);">$0</div>
<div class="t" style="right:262.54px;transform-origin:100% 50%;top:399.43px;font-size:8.94px;font-weight:400;color:#485266;transform:scaleX(0.797);">$0</div>
<div class="t" style="right:201.37px;transform-origin:100% 50%;top:399.43px;font-size:8.94px;font-weight:400;color:#485266;transform:scaleX(0.797);">$612</div>
<div class="t" style="right:140.20px;transform-origin:100% 50%;top:399.43px;font-size:8.94px;font-weight:400;color:#485266;transform:scaleX(0.797);">$0</div>
<div class="t" style="right:79.03px;transform-origin:100% 50%;top:399.43px;font-size:8.94px;font-weight:400;color:#485266;transform:scaleX(0.797);">$0</div>
<div style="position:absolute;left:12px;top:414px;width:1058px;height:21px;background:#eef1f6"></div>
<div style="position:absolute;left:16.3px;top:417.3px;width:64.3px;height:14.5px;background:#f0f2f6;border:1px solid #d6dbe4;border-radius:2px;box-sizing:border-box"></div>
<div style="position:absolute;left:89.3px;top:417.3px;width:52px;height:14.5px;background:#f0f2f6;border:1px solid #d6dbe4;border-radius:2px;box-sizing:border-box"></div>
<div class="t" style="left:20.80px;transform-origin:0 50%;top:421.09px;font-size:6.98px;font-weight:400;color:#4a5467;transform:scaleX(0.885);">Bulk Map...</div>
<div class="t" style="left:94.10px;transform-origin:0 50%;top:421.09px;font-size:6.98px;font-weight:400;color:#4a5467;transform:scaleX(0.885);">Bulk Cat...</div>
<svg style="position:absolute;left:68.6px;top:422.90px" width="6" height="4" viewBox="0 0 6 4" fill="none" stroke="#8a93a6" stroke-width="0.8"><path d="M0.4 0.5 L2.8 3 L5.2 0.5"/></svg>
<svg style="position:absolute;left:129.3px;top:422.90px" width="6" height="4" viewBox="0 0 6 4" fill="none" stroke="#8a93a6" stroke-width="0.8"><path d="M0.4 0.5 L2.8 3 L5.2 0.5"/></svg>
<div class="t" style="left:151.10px;transform-origin:0 50%;top:419.77px;font-size:8.66px;font-weight:700;color:#32436a;transform:scaleX(0.871);">Total Other Rental Inc. - Resid...</div>
<div class="t" style="right:751.90px;transform-origin:100% 50%;top:420.43px;font-size:8.94px;font-weight:700;color:#32436a;transform:scaleX(0.867);">-$362,304</div>
<div class="t" style="right:690.73px;transform-origin:100% 50%;top:420.43px;font-size:8.94px;font-weight:700;color:#32436a;transform:scaleX(0.867);">-$235,640</div>
<div class="t" style="right:629.56px;transform-origin:100% 50%;top:420.43px;font-size:8.94px;font-weight:700;color:#32436a;transform:scaleX(0.867);">-$251,162</div>
<div class="t" style="right:568.39px;transform-origin:100% 50%;top:420.43px;font-size:8.94px;font-weight:700;color:#32436a;transform:scaleX(0.867);">-$203,902</div>
<div class="t" style="right:507.22px;transform-origin:100% 50%;top:420.43px;font-size:8.94px;font-weight:700;color:#32436a;transform:scaleX(0.867);">-$266,361</div>
<div class="t" style="right:446.05px;transform-origin:100% 50%;top:420.43px;font-size:8.94px;font-weight:700;color:#32436a;transform:scaleX(0.867);">-$422,905</div>
<div class="t" style="right:384.88px;transform-origin:100% 50%;top:420.43px;font-size:8.94px;font-weight:700;color:#32436a;transform:scaleX(0.867);">-$209,282</div>
<div class="t" style="right:323.71px;transform-origin:100% 50%;top:420.43px;font-size:8.94px;font-weight:700;color:#32436a;transform:scaleX(0.867);">-$279,468</div>
<div class="t" style="right:262.54px;transform-origin:100% 50%;top:420.43px;font-size:8.94px;font-weight:700;color:#32436a;transform:scaleX(0.867);">-$399,476</div>
<div class="t" style="right:201.37px;transform-origin:100% 50%;top:420.43px;font-size:8.94px;font-weight:700;color:#32436a;transform:scaleX(0.867);">-$322,432</div>
<div class="t" style="right:140.20px;transform-origin:100% 50%;top:420.43px;font-size:8.94px;font-weight:700;color:#32436a;transform:scaleX(0.867);">-$917,875</div>
<div class="t" style="right:79.03px;transform-origin:100% 50%;top:420.43px;font-size:8.94px;font-weight:700;color:#32436a;transform:scaleX(0.867);">-$207,361</div>
<div class="t" style="left:886.80px;width:300px;text-align:center;transform-origin:50% 50%;top:420.43px;font-size:8.94px;font-weight:700;color:#32436a;transform:scaleX(0.867);">-$4,078,169</div>
<div style="position:absolute;left:12px;top:435px;width:1058px;height:21px;background:#eef1f6"></div>
<div style="position:absolute;left:16.3px;top:438.3px;width:64.3px;height:14.5px;background:#f0f2f6;border:1px solid #d6dbe4;border-radius:2px;box-sizing:border-box"></div>
<div style="position:absolute;left:89.3px;top:438.3px;width:52px;height:14.5px;background:#f0f2f6;border:1px solid #d6dbe4;border-radius:2px;box-sizing:border-box"></div>
<div class="t" style="left:20.80px;transform-origin:0 50%;top:442.09px;font-size:6.98px;font-weight:400;color:#4a5467;transform:scaleX(0.885);">Bulk Map...</div>
<div class="t" style="left:94.10px;transform-origin:0 50%;top:442.09px;font-size:6.98px;font-weight:400;color:#4a5467;transform:scaleX(0.885);">Bulk Cat...</div>
<svg style="position:absolute;left:68.6px;top:443.90px" width="6" height="4" viewBox="0 0 6 4" fill="none" stroke="#8a93a6" stroke-width="0.8"><path d="M0.4 0.5 L2.8 3 L5.2 0.5"/></svg>
<svg style="position:absolute;left:129.3px;top:443.90px" width="6" height="4" viewBox="0 0 6 4" fill="none" stroke="#8a93a6" stroke-width="0.8"><path d="M0.4 0.5 L2.8 3 L5.2 0.5"/></svg>
<div class="t" style="left:151.10px;transform-origin:0 50%;top:440.77px;font-size:8.66px;font-weight:700;color:#32436a;transform:scaleX(0.871);">Total Rental Inc. - Residential</div>
<div class="t" style="right:751.90px;transform-origin:100% 50%;top:441.43px;font-size:8.94px;font-weight:700;color:#32436a;transform:scaleX(0.867);">$1,101,401</div>
<div class="t" style="right:690.73px;transform-origin:100% 50%;top:441.43px;font-size:8.94px;font-weight:700;color:#32436a;transform:scaleX(0.867);">$1,231,136</div>
<div class="t" style="right:629.56px;transform-origin:100% 50%;top:441.43px;font-size:8.94px;font-weight:700;color:#32436a;transform:scaleX(0.867);">$1,225,141</div>
<div class="t" style="right:568.39px;transform-origin:100% 50%;top:441.43px;font-size:8.94px;font-weight:700;color:#32436a;transform:scaleX(0.867);">$1,309,960</div>
<div class="t" style="right:507.22px;transform-origin:100% 50%;top:441.43px;font-size:8.94px;font-weight:700;color:#32436a;transform:scaleX(0.867);">$1,207,046</div>
<div class="t" style="right:446.05px;transform-origin:100% 50%;top:441.43px;font-size:8.94px;font-weight:700;color:#32436a;transform:scaleX(0.867);">$1,109,773</div>
<div class="t" style="right:384.88px;transform-origin:100% 50%;top:441.43px;font-size:8.94px;font-weight:700;color:#32436a;transform:scaleX(0.867);">$1,273,660</div>
<div class="t" style="right:323.71px;transform-origin:100% 50%;top:441.43px;font-size:8.94px;font-weight:700;color:#32436a;transform:scaleX(0.867);">$1,231,424</div>
<div class="t" style="right:262.54px;transform-origin:100% 50%;top:441.43px;font-size:8.94px;font-weight:700;color:#32436a;transform:scaleX(0.867);">$1,100,040</div>
<div class="t" style="right:201.37px;transform-origin:100% 50%;top:441.43px;font-size:8.94px;font-weight:700;color:#32436a;transform:scaleX(0.867);">$1,185,846</div>
<div class="t" style="right:140.20px;transform-origin:100% 50%;top:441.43px;font-size:8.94px;font-weight:700;color:#32436a;transform:scaleX(0.867);">$585,393</div>
<div class="t" style="right:79.03px;transform-origin:100% 50%;top:441.43px;font-size:8.94px;font-weight:700;color:#32436a;transform:scaleX(0.867);">$1,304,282</div>
<div class="t" style="left:886.80px;width:300px;text-align:center;transform-origin:50% 50%;top:441.43px;font-size:8.94px;font-weight:700;color:#32436a;transform:scaleX(0.867);">$13,865,102</div>
<div style="position:absolute;left:16.3px;top:459.3px;width:64.3px;height:14.5px;background:#fff;border:1px solid #d6dbe4;border-radius:2px;box-sizing:border-box"></div>
<div style="position:absolute;left:89.3px;top:459.3px;width:52px;height:14.5px;background:#fff;border:1px solid #d6dbe4;border-radius:2px;box-sizing:border-box"></div>
<div class="t" style="left:20.80px;transform-origin:0 50%;top:463.09px;font-size:6.98px;font-weight:400;color:#4a5467;transform:scaleX(0.885);">Other Income</div>
<div class="t" style="left:94.10px;transform-origin:0 50%;top:463.09px;font-size:6.98px;font-weight:400;color:#4a5467;transform:scaleX(0.885);">Income</div>
<svg style="position:absolute;left:68.6px;top:464.90px" width="6" height="4" viewBox="0 0 6 4" fill="none" stroke="#8a93a6" stroke-width="0.8"><path d="M0.4 0.5 L2.8 3 L5.2 0.5"/></svg>
<svg style="position:absolute;left:129.3px;top:464.90px" width="6" height="4" viewBox="0 0 6 4" fill="none" stroke="#8a93a6" stroke-width="0.8"><path d="M0.4 0.5 L2.8 3 L5.2 0.5"/></svg>
<div class="t" style="left:151.10px;transform-origin:0 50%;top:461.77px;font-size:8.66px;font-weight:400;color:#485266;transform:scaleX(0.852);">Administrative Fees</div>
<div class="t" style="right:751.90px;transform-origin:100% 50%;top:462.43px;font-size:8.94px;font-weight:400;color:#485266;transform:scaleX(0.797);">$0</div>
<div class="t" style="right:690.73px;transform-origin:100% 50%;top:462.43px;font-size:8.94px;font-weight:400;color:#485266;transform:scaleX(0.797);">$0</div>
<div class="t" style="right:629.56px;transform-origin:100% 50%;top:462.43px;font-size:8.94px;font-weight:400;color:#485266;transform:scaleX(0.797);">$0</div>
<div class="t" style="right:568.39px;transform-origin:100% 50%;top:462.43px;font-size:8.94px;font-weight:400;color:#485266;transform:scaleX(0.797);">$0</div>
<div class="t" style="right:507.22px;transform-origin:100% 50%;top:462.43px;font-size:8.94px;font-weight:400;color:#485266;transform:scaleX(0.797);">$0</div>
<div class="t" style="right:446.05px;transform-origin:100% 50%;top:462.43px;font-size:8.94px;font-weight:400;color:#485266;transform:scaleX(0.797);">$0</div>
<div class="t" style="right:384.88px;transform-origin:100% 50%;top:462.43px;font-size:8.94px;font-weight:400;color:#485266;transform:scaleX(0.797);">$0</div>
<div class="t" style="right:323.71px;transform-origin:100% 50%;top:462.43px;font-size:8.94px;font-weight:400;color:#485266;transform:scaleX(0.797);">$31</div>
<div class="t" style="right:262.54px;transform-origin:100% 50%;top:462.43px;font-size:8.94px;font-weight:400;color:#485266;transform:scaleX(0.797);">$0</div>
<div class="t" style="right:201.37px;transform-origin:100% 50%;top:462.43px;font-size:8.94px;font-weight:400;color:#485266;transform:scaleX(0.797);">$0</div>
<div class="t" style="right:140.20px;transform-origin:100% 50%;top:462.43px;font-size:8.94px;font-weight:400;color:#485266;transform:scaleX(0.797);">$0</div>
<div class="t" style="right:79.03px;transform-origin:100% 50%;top:462.43px;font-size:8.94px;font-weight:400;color:#485266;transform:scaleX(0.797);">$0</div>
<div class="t" style="left:886.80px;width:300px;text-align:center;transform-origin:50% 50%;top:462.43px;font-size:8.94px;font-weight:700;color:#32436a;transform:scaleX(0.867);">$31</div>
<div style="position:absolute;left:16.3px;top:480.3px;width:64.3px;height:14.5px;background:#fff;border:1px solid #d6dbe4;border-radius:2px;box-sizing:border-box"></div>
<div style="position:absolute;left:89.3px;top:480.3px;width:52px;height:14.5px;background:#fff;border:1px solid #d6dbe4;border-radius:2px;box-sizing:border-box"></div>
<div class="t" style="left:20.80px;transform-origin:0 50%;top:484.09px;font-size:6.98px;font-weight:400;color:#4a5467;transform:scaleX(0.885);">Other Income</div>
<div class="t" style="left:94.10px;transform-origin:0 50%;top:484.09px;font-size:6.98px;font-weight:400;color:#4a5467;transform:scaleX(0.885);">Income</div>
<svg style="position:absolute;left:68.6px;top:485.90px" width="6" height="4" viewBox="0 0 6 4" fill="none" stroke="#8a93a6" stroke-width="0.8"><path d="M0.4 0.5 L2.8 3 L5.2 0.5"/></svg>
<svg style="position:absolute;left:129.3px;top:485.90px" width="6" height="4" viewBox="0 0 6 4" fill="none" stroke="#8a93a6" stroke-width="0.8"><path d="M0.4 0.5 L2.8 3 L5.2 0.5"/></svg>
<div class="t" style="left:151.10px;transform-origin:0 50%;top:482.77px;font-size:8.66px;font-weight:400;color:#485266;transform:scaleX(0.852);">Amenity Fees</div>
<div class="t" style="right:751.90px;transform-origin:100% 50%;top:483.43px;font-size:8.94px;font-weight:400;color:#485266;transform:scaleX(0.797);">$24,345</div>
<div class="t" style="right:690.73px;transform-origin:100% 50%;top:483.43px;font-size:8.94px;font-weight:400;color:#485266;transform:scaleX(0.797);">$22,300</div>
<div class="t" style="right:629.56px;transform-origin:100% 50%;top:483.43px;font-size:8.94px;font-weight:400;color:#485266;transform:scaleX(0.797);">$23,533</div>
<div class="t" style="right:568.39px;transform-origin:100% 50%;top:483.43px;font-size:8.94px;font-weight:400;color:#485266;transform:scaleX(0.797);">$24,116</div>
<div class="t" style="right:507.22px;transform-origin:100% 50%;top:483.43px;font-size:8.94px;font-weight:400;color:#485266;transform:scaleX(0.797);">$23,313</div>
<div class="t" style="right:446.05px;transform-origin:100% 50%;top:483.43px;font-size:8.94px;font-weight:400;color:#485266;transform:scaleX(0.797);">$24,073</div>
<div class="t" style="right:384.88px;transform-origin:100% 50%;top:483.43px;font-size:8.94px;font-weight:400;color:#485266;transform:scaleX(0.797);">$23,967</div>
<div class="t" style="right:323.71px;transform-origin:100% 50%;top:483.43px;font-size:8.94px;font-weight:400;color:#485266;transform:scaleX(0.797);">$23,209</div>
<div class="t" style="right:262.54px;transform-origin:100% 50%;top:483.43px;font-size:8.94px;font-weight:400;color:#485266;transform:scaleX(0.797);">$23,026</div>
<div class="t" style="right:201.37px;transform-origin:100% 50%;top:483.43px;font-size:8.94px;font-weight:400;color:#485266;transform:scaleX(0.797);">$22,818</div>
<div class="t" style="right:140.20px;transform-origin:100% 50%;top:483.43px;font-size:8.94px;font-weight:400;color:#485266;transform:scaleX(0.797);">$20,355</div>
<div class="t" style="right:79.03px;transform-origin:100% 50%;top:483.43px;font-size:8.94px;font-weight:400;color:#485266;transform:scaleX(0.797);">$18,737</div>
<div class="t" style="left:886.80px;width:300px;text-align:center;transform-origin:50% 50%;top:483.43px;font-size:8.94px;font-weight:700;color:#32436a;transform:scaleX(0.867);">$273,792</div>
<div style="position:absolute;left:16.3px;top:501.3px;width:64.3px;height:14.5px;background:#fff;border:1px solid #d6dbe4;border-radius:2px;box-sizing:border-box"></div>
<div style="position:absolute;left:89.3px;top:501.3px;width:52px;height:14.5px;background:#fff;border:1px solid #d6dbe4;border-radius:2px;box-sizing:border-box"></div>
<div class="t" style="left:20.80px;transform-origin:0 50%;top:505.09px;font-size:6.98px;font-weight:400;color:#4a5467;transform:scaleX(0.885);">Other Income</div>
<div class="t" style="left:94.10px;transform-origin:0 50%;top:505.09px;font-size:6.98px;font-weight:400;color:#4a5467;transform:scaleX(0.885);">Income</div>
<svg style="position:absolute;left:68.6px;top:506.90px" width="6" height="4" viewBox="0 0 6 4" fill="none" stroke="#8a93a6" stroke-width="0.8"><path d="M0.4 0.5 L2.8 3 L5.2 0.5"/></svg>
<svg style="position:absolute;left:129.3px;top:506.90px" width="6" height="4" viewBox="0 0 6 4" fill="none" stroke="#8a93a6" stroke-width="0.8"><path d="M0.4 0.5 L2.8 3 L5.2 0.5"/></svg>
<div class="t" style="left:151.10px;transform-origin:0 50%;top:503.77px;font-size:8.66px;font-weight:400;color:#485266;transform:scaleX(0.852);">Application Fees</div>
<div class="t" style="right:751.90px;transform-origin:100% 50%;top:504.43px;font-size:8.94px;font-weight:400;color:#485266;transform:scaleX(0.797);">$3,050</div>
<div class="t" style="right:690.73px;transform-origin:100% 50%;top:504.43px;font-size:8.94px;font-weight:400;color:#485266;transform:scaleX(0.797);">$2,400</div>
<div class="t" style="right:629.56px;transform-origin:100% 50%;top:504.43px;font-size:8.94px;font-weight:400;color:#485266;transform:scaleX(0.797);">$950</div>
<div class="t" style="right:568.39px;transform-origin:100% 50%;top:504.43px;font-size:8.94px;font-weight:400;color:#485266;transform:scaleX(0.797);">$1,000</div>
<div class="t" style="right:507.22px;transform-origin:100% 50%;top:504.43px;font-size:8.94px;font-weight:400;color:#485266;transform:scaleX(0.797);">$1,850</div>
<div class="t" style="right:446.05px;transform-origin:100% 50%;top:504.43px;font-size:8.94px;font-weight:400;color:#485266;transform:scaleX(0.797);">$600</div>
<div class="t" style="right:384.88px;transform-origin:100% 50%;top:504.43px;font-size:8.94px;font-weight:400;color:#485266;transform:scaleX(0.797);">$1,450</div>
<div class="t" style="right:323.71px;transform-origin:100% 50%;top:504.43px;font-size:8.94px;font-weight:400;color:#485266;transform:scaleX(0.797);">$1,450</div>
<div class="t" style="right:262.54px;transform-origin:100% 50%;top:504.43px;font-size:8.94px;font-weight:400;color:#485266;transform:scaleX(0.797);">$1,150</div>
<div class="t" style="right:201.37px;transform-origin:100% 50%;top:504.43px;font-size:8.94px;font-weight:400;color:#485266;transform:scaleX(0.797);">$2,000</div>
<div class="t" style="right:140.20px;transform-origin:100% 50%;top:504.43px;font-size:8.94px;font-weight:400;color:#485266;transform:scaleX(0.797);">$2,450</div>
<div class="t" style="right:79.03px;transform-origin:100% 50%;top:504.43px;font-size:8.94px;font-weight:400;color:#485266;transform:scaleX(0.797);">$1,350</div>
<div class="t" style="left:886.80px;width:300px;text-align:center;transform-origin:50% 50%;top:504.43px;font-size:8.94px;font-weight:700;color:#32436a;transform:scaleX(0.867);">$19,700</div>
<div style="position:absolute;left:16.3px;top:522.3px;width:64.3px;height:14.5px;background:#fff;border:1px solid #d6dbe4;border-radius:2px;box-sizing:border-box"></div>
<div style="position:absolute;left:89.3px;top:522.3px;width:52px;height:14.5px;background:#fff;border:1px solid #d6dbe4;border-radius:2px;box-sizing:border-box"></div>
<div class="t" style="left:20.80px;transform-origin:0 50%;top:526.09px;font-size:6.98px;font-weight:400;color:#4a5467;transform:scaleX(0.885);">Other Income</div>
<div class="t" style="left:94.10px;transform-origin:0 50%;top:526.09px;font-size:6.98px;font-weight:400;color:#4a5467;transform:scaleX(0.885);">Income</div>
<svg style="position:absolute;left:68.6px;top:527.90px" width="6" height="4" viewBox="0 0 6 4" fill="none" stroke="#8a93a6" stroke-width="0.8"><path d="M0.4 0.5 L2.8 3 L5.2 0.5"/></svg>
<svg style="position:absolute;left:129.3px;top:527.90px" width="6" height="4" viewBox="0 0 6 4" fill="none" stroke="#8a93a6" stroke-width="0.8"><path d="M0.4 0.5 L2.8 3 L5.2 0.5"/></svg>
<div class="t" style="left:151.10px;transform-origin:0 50%;top:524.77px;font-size:8.66px;font-weight:400;color:#485266;transform:scaleX(0.852);">Club Room Rental Fees</div>
<div class="t" style="right:751.90px;transform-origin:100% 50%;top:525.43px;font-size:8.94px;font-weight:400;color:#485266;transform:scaleX(0.797);">$500</div>
<div class="t" style="right:690.73px;transform-origin:100% 50%;top:525.43px;font-size:8.94px;font-weight:400;color:#485266;transform:scaleX(0.797);">$700</div>
<div class="t" style="right:629.56px;transform-origin:100% 50%;top:525.43px;font-size:8.94px;font-weight:400;color:#485266;transform:scaleX(0.797);">$200</div>
<div class="t" style="right:568.39px;transform-origin:100% 50%;top:525.43px;font-size:8.94px;font-weight:400;color:#485266;transform:scaleX(0.797);">$200</div>
<div class="t" style="right:507.22px;transform-origin:100% 50%;top:525.43px;font-size:8.94px;font-weight:400;color:#485266;transform:scaleX(0.797);">$500</div>
<div class="t" style="right:446.05px;transform-origin:100% 50%;top:525.43px;font-size:8.94px;font-weight:400;color:#485266;transform:scaleX(0.797);">$0</div>
<div class="t" style="right:384.88px;transform-origin:100% 50%;top:525.43px;font-size:8.94px;font-weight:400;color:#485266;transform:scaleX(0.797);">$400</div>
<div class="t" style="right:323.71px;transform-origin:100% 50%;top:525.43px;font-size:8.94px;font-weight:400;color:#485266;transform:scaleX(0.797);">$400</div>
<div class="t" style="right:262.54px;transform-origin:100% 50%;top:525.43px;font-size:8.94px;font-weight:400;color:#485266;transform:scaleX(0.797);">$600</div>
<div class="t" style="right:201.37px;transform-origin:100% 50%;top:525.43px;font-size:8.94px;font-weight:400;color:#485266;transform:scaleX(0.797);">$0</div>
<div class="t" style="right:140.20px;transform-origin:100% 50%;top:525.43px;font-size:8.94px;font-weight:400;color:#485266;transform:scaleX(0.797);">$400</div>
<div class="t" style="right:79.03px;transform-origin:100% 50%;top:525.43px;font-size:8.94px;font-weight:400;color:#485266;transform:scaleX(0.797);">$0</div>
<div class="t" style="left:886.80px;width:300px;text-align:center;transform-origin:50% 50%;top:525.43px;font-size:8.94px;font-weight:700;color:#32436a;transform:scaleX(0.867);">$3,900</div>
<div style="position:absolute;left:16.3px;top:543.3px;width:64.3px;height:14.5px;background:#fff;border:1px solid #d6dbe4;border-radius:2px;box-sizing:border-box"></div>
<div style="position:absolute;left:89.3px;top:543.3px;width:52px;height:14.5px;background:#fff;border:1px solid #d6dbe4;border-radius:2px;box-sizing:border-box"></div>
<div class="t" style="left:20.80px;transform-origin:0 50%;top:547.09px;font-size:6.98px;font-weight:400;color:#4a5467;transform:scaleX(0.885);">Other Income</div>
<div class="t" style="left:94.10px;transform-origin:0 50%;top:547.09px;font-size:6.98px;font-weight:400;color:#4a5467;transform:scaleX(0.885);">Income</div>
<svg style="position:absolute;left:68.6px;top:548.90px" width="6" height="4" viewBox="0 0 6 4" fill="none" stroke="#8a93a6" stroke-width="0.8"><path d="M0.4 0.5 L2.8 3 L5.2 0.5"/></svg>
<svg style="position:absolute;left:129.3px;top:548.90px" width="6" height="4" viewBox="0 0 6 4" fill="none" stroke="#8a93a6" stroke-width="0.8"><path d="M0.4 0.5 L2.8 3 L5.2 0.5"/></svg>
<div class="t" style="left:151.10px;transform-origin:0 50%;top:545.77px;font-size:8.66px;font-weight:400;color:#485266;transform:scaleX(0.852);">Community Fees</div>
<div class="t" style="right:751.90px;transform-origin:100% 50%;top:546.43px;font-size:8.94px;font-weight:400;color:#485266;transform:scaleX(0.797);">$0</div>
<div class="t" style="right:690.73px;transform-origin:100% 50%;top:546.43px;font-size:8.94px;font-weight:400;color:#485266;transform:scaleX(0.797);">$0</div>
<div class="t" style="right:629.56px;transform-origin:100% 50%;top:546.43px;font-size:8.94px;font-weight:400;color:#485266;transform:scaleX(0.797);">$29</div>
<div class="t" style="right:568.39px;transform-origin:100% 50%;top:546.43px;font-size:8.94px;font-weight:400;color:#485266;transform:scaleX(0.797);">-$29</div>
<div class="t" style="right:507.22px;transform-origin:100% 50%;top:546.43px;font-size:8.94px;font-weight:400;color:#485266;transform:scaleX(0.797);">$0</div>
<div class="t" style="right:446.05px;transform-origin:100% 50%;top:546.43px;font-size:8.94px;font-weight:400;color:#485266;transform:scaleX(0.797);">$0</div>
<div class="t" style="right:384.88px;transform-origin:100% 50%;top:546.43px;font-size:8.94px;font-weight:400;color:#485266;transform:scaleX(0.797);">$0</div>
<div class="t" style="right:323.71px;transform-origin:100% 50%;top:546.43px;font-size:8.94px;font-weight:400;color:#485266;transform:scaleX(0.797);">$0</div>
<div class="t" style="right:262.54px;transform-origin:100% 50%;top:546.43px;font-size:8.94px;font-weight:400;color:#485266;transform:scaleX(0.797);">$0</div>
<div class="t" style="right:201.37px;transform-origin:100% 50%;top:546.43px;font-size:8.94px;font-weight:400;color:#485266;transform:scaleX(0.797);">$0</div>
<div class="t" style="right:140.20px;transform-origin:100% 50%;top:546.43px;font-size:8.94px;font-weight:400;color:#485266;transform:scaleX(0.797);">$0</div>
<div class="t" style="right:79.03px;transform-origin:100% 50%;top:546.43px;font-size:8.94px;font-weight:400;color:#485266;transform:scaleX(0.797);">$0</div>
<div class="t" style="left:886.80px;width:300px;text-align:center;transform-origin:50% 50%;top:546.43px;font-size:8.94px;font-weight:700;color:#32436a;transform:scaleX(0.867);">$0</div>
<div style="position:absolute;left:16.3px;top:564.3px;width:64.3px;height:14.5px;background:#fff;border:1px solid #d6dbe4;border-radius:2px;box-sizing:border-box"></div>
<div style="position:absolute;left:89.3px;top:564.3px;width:52px;height:14.5px;background:#fff;border:1px solid #d6dbe4;border-radius:2px;box-sizing:border-box"></div>
<div class="t" style="left:20.80px;transform-origin:0 50%;top:568.09px;font-size:6.98px;font-weight:400;color:#4a5467;transform:scaleX(0.885);">Other Income</div>
<div class="t" style="left:94.10px;transform-origin:0 50%;top:568.09px;font-size:6.98px;font-weight:400;color:#4a5467;transform:scaleX(0.885);">Income</div>
<svg style="position:absolute;left:68.6px;top:569.90px" width="6" height="4" viewBox="0 0 6 4" fill="none" stroke="#8a93a6" stroke-width="0.8"><path d="M0.4 0.5 L2.8 3 L5.2 0.5"/></svg>
<svg style="position:absolute;left:129.3px;top:569.90px" width="6" height="4" viewBox="0 0 6 4" fill="none" stroke="#8a93a6" stroke-width="0.8"><path d="M0.4 0.5 L2.8 3 L5.2 0.5"/></svg>
<div class="t" style="left:151.10px;transform-origin:0 50%;top:566.77px;font-size:8.66px;font-weight:400;color:#485266;transform:scaleX(0.852);">Damages</div>
<div class="t" style="right:751.90px;transform-origin:100% 50%;top:567.43px;font-size:8.94px;font-weight:400;color:#485266;transform:scaleX(0.797);">$2,004</div>
<div class="t" style="right:690.73px;transform-origin:100% 50%;top:567.43px;font-size:8.94px;font-weight:400;color:#485266;transform:scaleX(0.797);">$0</div>
<div class="t" style="right:629.56px;transform-origin:100% 50%;top:567.43px;font-size:8.94px;font-weight:400;color:#485266;transform:scaleX(0.797);">$9,836</div>
<div class="t" style="right:568.39px;transform-origin:100% 50%;top:567.43px;font-size:8.94px;font-weight:400;color:#485266;transform:scaleX(0.797);">$525</div>
<div class="t" style="right:507.22px;transform-origin:100% 50%;top:567.43px;font-size:8.94px;font-weight:400;color:#485266;transform:scaleX(0.797);">$350</div>
<div class="t" style="right:446.05px;transform-origin:100% 50%;top:567.43px;font-size:8.94px;font-weight:400;color:#485266;transform:scaleX(0.797);">$850</div>
<div class="t" style="right:384.88px;transform-origin:100% 50%;top:567.43px;font-size:8.94px;font-weight:400;color:#485266;transform:scaleX(0.797);">$1,424</div>
<div class="t" style="right:323.71px;transform-origin:100% 50%;top:567.43px;font-size:8.94px;font-weight:400;color:#485266;transform:scaleX(0.797);">$250</div>
<div class="t" style="right:262.54px;transform-origin:100% 50%;top:567.43px;font-size:8.94px;font-weight:400;color:#485266;transform:scaleX(0.797);">$800</div>
<div class="t" style="right:201.37px;transform-origin:100% 50%;top:567.43px;font-size:8.94px;font-weight:400;color:#485266;transform:scaleX(0.797);">$1,825</div>
<div class="t" style="right:140.20px;transform-origin:100% 50%;top:567.43px;font-size:8.94px;font-weight:400;color:#485266;transform:scaleX(0.797);">$3,640</div>
<div class="t" style="right:79.03px;transform-origin:100% 50%;top:567.43px;font-size:8.94px;font-weight:400;color:#485266;transform:scaleX(0.797);">-$2,950</div>
<div class="t" style="left:886.80px;width:300px;text-align:center;transform-origin:50% 50%;top:567.43px;font-size:8.94px;font-weight:700;color:#32436a;transform:scaleX(0.867);">$18,553</div>
<div style="position:absolute;left:16.3px;top:585.3px;width:64.3px;height:14.5px;background:#fff;border:1px solid #d6dbe4;border-radius:2px;box-sizing:border-box"></div>
<div style="position:absolute;left:89.3px;top:585.3px;width:52px;height:14.5px;background:#fff;border:1px solid #d6dbe4;border-radius:2px;box-sizing:border-box"></div>
<div class="t" style="left:20.80px;transform-origin:0 50%;top:589.09px;font-size:6.98px;font-weight:400;color:#4a5467;transform:scaleX(0.885);">Other Income</div>
<div class="t" style="left:94.10px;transform-origin:0 50%;top:589.09px;font-size:6.98px;font-weight:400;color:#4a5467;transform:scaleX(0.885);">Income</div>
<svg style="position:absolute;left:68.6px;top:590.90px" width="6" height="4" viewBox="0 0 6 4" fill="none" stroke="#8a93a6" stroke-width="0.8"><path d="M0.4 0.5 L2.8 3 L5.2 0.5"/></svg>
<svg style="position:absolute;left:129.3px;top:590.90px" width="6" height="4" viewBox="0 0 6 4" fill="none" stroke="#8a93a6" stroke-width="0.8"><path d="M0.4 0.5 L2.8 3 L5.2 0.5"/></svg>
<div class="t" style="left:151.10px;transform-origin:0 50%;top:587.77px;font-size:8.66px;font-weight:400;color:#485266;transform:scaleX(0.852);">Damage Fees - Write Offs</div>
<div class="t" style="right:751.90px;transform-origin:100% 50%;top:588.43px;font-size:8.94px;font-weight:400;color:#485266;transform:scaleX(0.797);">$0</div>
<div class="t" style="right:690.73px;transform-origin:100% 50%;top:588.43px;font-size:8.94px;font-weight:400;color:#485266;transform:scaleX(0.797);">$0</div>
<div class="t" style="right:629.56px;transform-origin:100% 50%;top:588.43px;font-size:8.94px;font-weight:400;color:#485266;transform:scaleX(0.797);">$0</div>
<div class="t" style="right:568.39px;transform-origin:100% 50%;top:588.43px;font-size:8.94px;font-weight:400;color:#485266;transform:scaleX(0.797);">$0</div>
<div class="t" style="right:507.22px;transform-origin:100% 50%;top:588.43px;font-size:8.94px;font-weight:400;color:#485266;transform:scaleX(0.797);">$0</div>
<div class="t" style="right:446.05px;transform-origin:100% 50%;top:588.43px;font-size:8.94px;font-weight:400;color:#485266;transform:scaleX(0.797);">$0</div>
<div class="t" style="right:384.88px;transform-origin:100% 50%;top:588.43px;font-size:8.94px;font-weight:400;color:#485266;transform:scaleX(0.797);">$0</div>
<div class="t" style="right:323.71px;transform-origin:100% 50%;top:588.43px;font-size:8.94px;font-weight:400;color:#485266;transform:scaleX(0.797);">$0</div>
<div class="t" style="right:262.54px;transform-origin:100% 50%;top:588.43px;font-size:8.94px;font-weight:400;color:#485266;transform:scaleX(0.797);">$0</div>
<div class="t" style="right:201.37px;transform-origin:100% 50%;top:588.43px;font-size:8.94px;font-weight:400;color:#485266;transform:scaleX(0.797);">$0</div>
<div class="t" style="right:140.20px;transform-origin:100% 50%;top:588.43px;font-size:8.94px;font-weight:400;color:#485266;transform:scaleX(0.797);">$0</div>
<div class="t" style="right:79.03px;transform-origin:100% 50%;top:588.43px;font-size:8.94px;font-weight:400;color:#485266;transform:scaleX(0.797);">-$90</div>
<div class="t" style="left:886.80px;width:300px;text-align:center;transform-origin:50% 50%;top:588.43px;font-size:8.94px;font-weight:700;color:#32436a;transform:scaleX(0.867);">-$90</div>
<div style="position:absolute;left:1002px;top:161.6px;width:1.2px;height:443.4px;background:#6a7a96"></div>
<div style="position:absolute;left:1070px;top:138px;width:3.6px;height:79px;background:#a6a6a6;border-radius:2px"></div>
<div style="position:absolute;left:841.2px;top:111.2px;width:60.1px;height:17.2px;background:#fff;border:1px solid #d5dae3;border-right:none;box-sizing:border-box"></div>
<div class="t" style="left:848.90px;transform-origin:0 50%;top:115.53px;font-size:8.94px;font-weight:400;color:#3c4b66;transform:scaleX(0.917);">As Reported</div>
<div style="position:absolute;left:901.3px;top:111.3px;width:57.8px;height:16.5px;background:#3d5580"></div>
<div class="t" style="left:908.50px;transform-origin:0 50%;top:115.53px;font-size:8.94px;font-weight:700;color:#fff;transform:scaleX(0.848);">Adjusted</div>
<div style="position:absolute;left:943.2px;top:114.8px;width:8.7px;height:8.7px;border-radius:50%;background:#5f7298"></div>
<div class="t" style="left:797.60px;width:300px;text-align:center;transform-origin:50% 50%;top:115.69px;font-size:6.98px;font-weight:700;color:#fff;transform:scaleX(0.950);">7</div>
<div style="position:absolute;left:966.8px;top:114.8px;width:9px;height:9px;background:#fff;border:1px solid #a4acba;border-radius:1px;box-sizing:border-box"></div>
<div class="t" style="left:980.00px;transform-origin:0 50%;top:115.55px;font-size:8.80px;font-weight:400;color:#5a6477;transform:scaleX(0.901);">Outliers</div>
<div style="position:absolute;left:1014.8px;top:111.3px;width:52.3px;height:16.3px;background:#fbfcfd;border:1px solid #d8dde5;box-sizing:border-box;border-radius:1px"></div>
<svg style="position:absolute;left:1014px;top:110px" width="20" height="20" viewBox="0 0 20 20" fill="none" stroke="#4a5a78" stroke-width="1">
<circle cx="8.4" cy="7.4" r="1.35"/><path d="M9.8 7.4 H14"/><path d="M7.2 11.4 H11"/><circle cx="12.4" cy="11.4" r="1.35"/></svg>
<div class="t" style="left:1031.80px;transform-origin:0 50%;top:115.55px;font-size:8.80px;font-weight:400;color:#3c4b66;transform:scaleX(0.925);">Settings</div>
<div style="position:absolute;left:898.2px;top:130px;width:168.3px;height:279.5px;background:#fff;border:1px solid #e6e8ee;box-sizing:border-box;border-radius:3px;box-shadow:0 2px 6px rgba(30,40,60,0.14)"></div>
<div class="t" style="left:906.50px;transform-origin:0 50%;top:138.50px;font-size:7.68px;font-weight:700;color:#3d5178;transform:scaleX(0.850);">OUTLIER DETECTION</div>
<div class="t" style="left:906.50px;transform-origin:0 50%;top:155.79px;font-size:6.98px;font-weight:400;color:#454d5d;transform:scaleX(0.844);">Threshold (Standard Deviations)</div>
<div style="position:absolute;left:904.3px;top:166.5px;width:156.4px;height:21.1px;background:#f6f7fa;border:1.5px solid #3b76e6;border-radius:1.5px;box-sizing:border-box"></div>
<div class="t" style="left:913.90px;transform-origin:0 50%;top:173.70px;font-size:7.68px;font-weight:400;color:#2f3747;transform:scaleX(0.867);">2x (Standard)</div>
<svg style="position:absolute;left:1043.5px;top:175.5px" width="8" height="5" viewBox="0 0 8 5" fill="none" stroke="#5b6577" stroke-width="0.9"><path d="M1 0.8 L3.8 3.6 L6.6 0.8"/></svg>
<div style="position:absolute;left:906.5px;top:194px;width:152.4px;height:1px;background:#eceef2"></div>
<div class="t" style="left:906.50px;transform-origin:0 50%;top:205.70px;font-size:7.68px;font-weight:700;color:#3d5178;transform:scaleX(0.851);">FILTER LINE ITEMS</div>
<div style="position:absolute;left:906.5px;top:218.4px;width:152.4px;height:16.5px;background:#f6f7fa;border:1px solid #e3e6ec;border-radius:1.5px;box-sizing:border-box"></div>
<div class="t" style="left:913.90px;transform-origin:0 50%;top:223.30px;font-size:7.68px;font-weight:400;color:#2f3747;transform:scaleX(0.879);">Show All</div>
<svg style="position:absolute;left:1043.5px;top:225px" width="8" height="5" viewBox="0 0 8 5" fill="none" stroke="#5b6577" stroke-width="0.9"><path d="M1 0.8 L3.8 3.6 L6.6 0.8"/></svg>
<div style="position:absolute;left:906.5px;top:244px;width:152.4px;height:1px;background:#eceef2"></div>
<div class="t" style="left:906.50px;transform-origin:0 50%;top:255.60px;font-size:7.68px;font-weight:700;color:#3d5178;transform:scaleX(0.886);">COLUMN VISIBILITY</div>
<div style="position:absolute;left:906.6px;top:269.3px;width:7px;height:6.6px;background:#3d5178;border-radius:1px"></div>
<svg style="position:absolute;left:906.6px;top:269.3px" width="7" height="7" viewBox="0 0 7 7" fill="none" stroke="#c9d3e6" stroke-width="0.7"><path d="M1.6 3.9 L2.9 5.1 L5.4 2.2"/></svg>
<div class="t" style="left:917.70px;transform-origin:0 50%;top:269.03px;font-size:6.70px;font-weight:400;color:#2f3747;transform:scaleX(0.900);">Show Mapping Column</div>
<div style="position:absolute;left:906.6px;top:282.5px;width:7px;height:6.6px;background:#3d5178;border-radius:1px"></div>
<svg style="position:absolute;left:906.6px;top:282.5px" width="7" height="7" viewBox="0 0 7 7" fill="none" stroke="#c9d3e6" stroke-width="0.7"><path d="M1.6 3.9 L2.9 5.1 L5.4 2.2"/></svg>
<div class="t" style="left:917.70px;transform-origin:0 50%;top:282.23px;font-size:6.70px;font-weight:400;color:#2f3747;transform:scaleX(0.894);">Show Monthly Columns</div>
<div style="position:absolute;left:906.6px;top:296.3px;width:7px;height:6.6px;background:#3d5178;border-radius:1px"></div>
<svg style="position:absolute;left:906.6px;top:296.3px" width="7" height="7" viewBox="0 0 7 7" fill="none" stroke="#c9d3e6" stroke-width="0.7"><path d="M1.6 3.9 L2.9 5.1 L5.4 2.2"/></svg>
<div class="t" style="left:917.70px;transform-origin:0 50%;top:296.03px;font-size:6.70px;font-weight:400;color:#2f3747;transform:scaleX(0.886);">Show Total Column</div>
<div style="position:absolute;left:906.5px;top:313.5px;width:152.4px;height:1px;background:#eceef2"></div>
<div class="t" style="left:906.50px;transform-origin:0 50%;top:324.00px;font-size:7.68px;font-weight:700;color:#3d5178;transform:scaleX(0.882);">NUMBER FORMAT</div>
<div style="position:absolute;left:906.5px;top:336.4px;width:152.4px;height:16.6px;background:#f6f7fa;border:1px solid #e3e6ec;border-radius:1.5px;box-sizing:border-box"></div>
<div class="t" style="left:914.00px;transform-origin:0 50%;top:341.30px;font-size:7.68px;font-weight:400;color:#2f3747;transform:scaleX(0.872);">Full Numbers ($1,234,567)</div>
<svg style="position:absolute;left:1043.5px;top:343px" width="8" height="5" viewBox="0 0 8 5" fill="none" stroke="#5b6577" stroke-width="0.9"><path d="M1 0.8 L3.8 3.6 L6.6 0.8"/></svg>
<div style="position:absolute;left:906.6px;top:358.8px;width:7px;height:6.8px;background:#3d5178;border-radius:1px"></div>
<svg style="position:absolute;left:906.6px;top:358.8px" width="7" height="7" viewBox="0 0 7 7" fill="none" stroke="#c9d3e6" stroke-width="0.7"><path d="M1.6 3.9 L2.9 5.1 L5.4 2.2"/></svg>
<div class="t" style="left:917.70px;transform-origin:0 50%;top:358.63px;font-size:6.70px;font-weight:400;color:#2f3747;transform:scaleX(0.850);">Show Decimal Places</div>
<div style="position:absolute;left:906.5px;top:376px;width:152.4px;height:1px;background:#eceef2"></div>
<div style="position:absolute;left:906.5px;top:386px;width:152.4px;height:15.6px;background:#f6f7fa;border:1px solid #e3e6ec;border-radius:1.5px;box-sizing:border-box"></div>
<div class="t" style="left:832.70px;width:300px;text-align:center;transform-origin:50% 50%;top:390.62px;font-size:8.24px;font-weight:400;color:#2a3140;transform:scaleX(0.849);">Reset to Defaults</div>
</body></html>
